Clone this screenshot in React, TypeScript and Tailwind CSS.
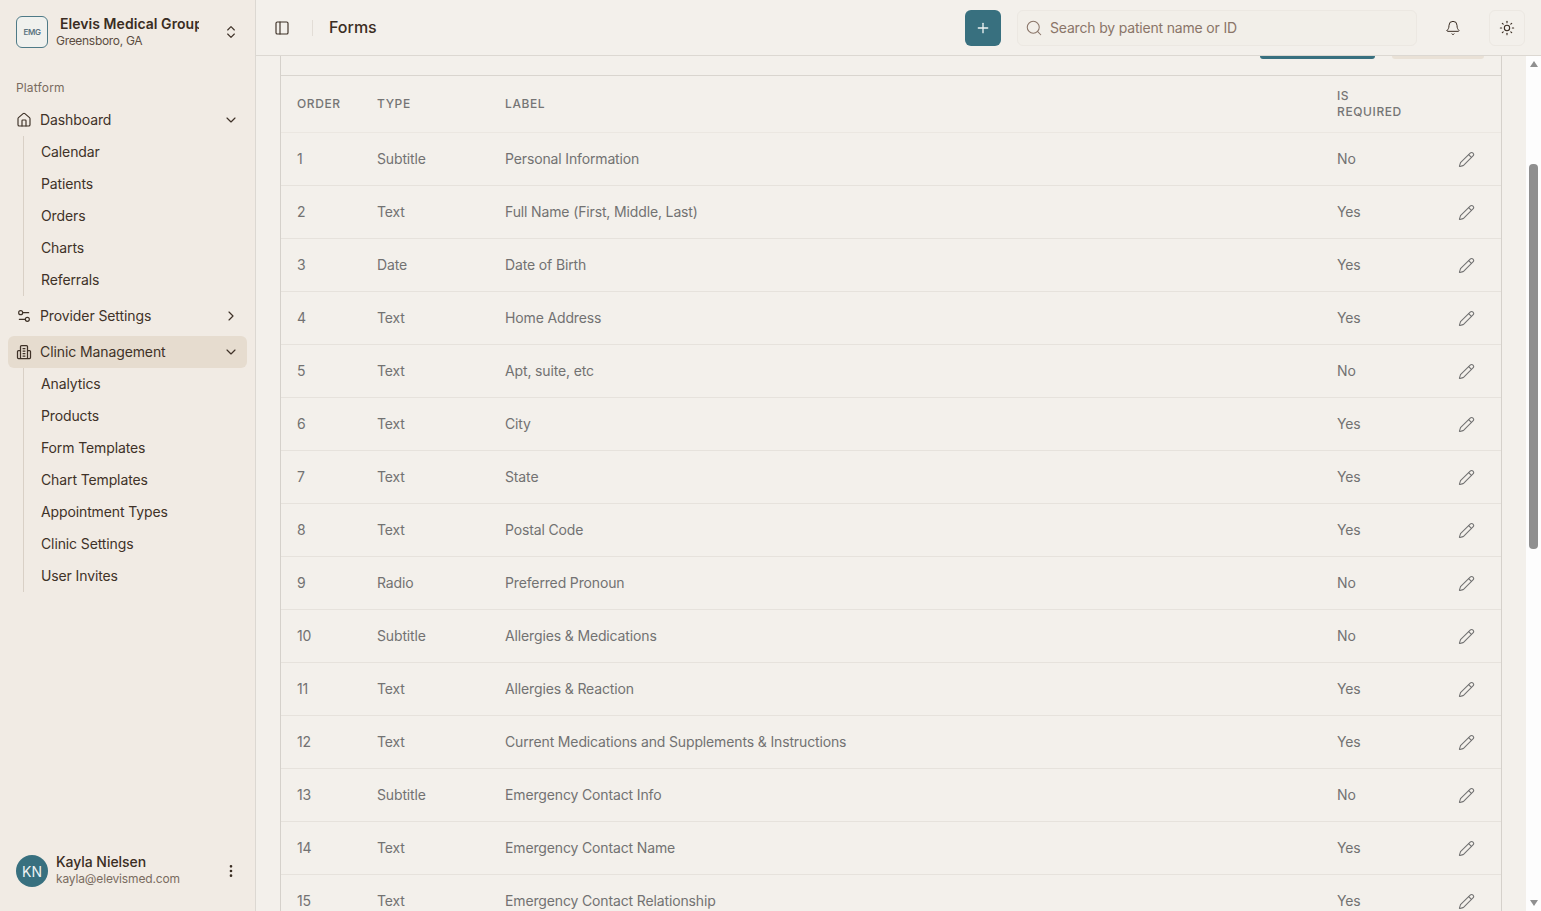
import {
  Bell,
  ChevronDown,
  ChevronRight,
  ChevronsUpDown,
  EllipsisVertical,
  House,
  PanelLeft,
  Pencil,
  Plus,
  Search,
  Settings2,
  Sun,
} from "lucide-react";
import type { ReactNode } from "react";

const FIELDS: [string, string, string][] = [
  ["Subtitle", "Personal Information", "No"],
  ["Text", "Full Name (First, Middle, Last)", "Yes"],
  ["Date", "Date of Birth", "Yes"],
  ["Text", "Home Address", "Yes"],
  ["Text", "Apt, suite, etc", "No"],
  ["Text", "City", "Yes"],
  ["Text", "State", "Yes"],
  ["Text", "Postal Code", "Yes"],
  ["Radio", "Preferred Pronoun", "No"],
  ["Subtitle", "Allergies & Medications", "No"],
  ["Text", "Allergies & Reaction", "Yes"],
  ["Text", "Current Medications and Supplements & Instructions", "Yes"],
  ["Subtitle", "Emergency Contact Info", "No"],
  ["Text", "Emergency Contact Name", "Yes"],
  ["Text", "Emergency Contact Relationship", "Yes"],
];

function ClinicIcon() {
  return (
    <svg viewBox="0 0 16 16" fill="none" stroke="currentColor" strokeWidth="1.25" className="h-4 w-4">
      <path d="M4.5 14.5V2.6c0-.6.4-1 1-1h5c.6 0 1 .4 1 1v11.9" />
      <path d="M4.5 6.5H2.5c-.6 0-1 .4-1 1v6c0 .6.4 1 1 1h11c.6 0 1-.4 1-1v-6c0-.6-.4-1-1-1h-2" />
      <path d="M6.6 4.5h2.8M6.6 7h2.8M6.6 9.5h2.8M6.6 12h2.8" />
    </svg>
  );
}

function NavRow({
  icon,
  label,
  open,
  active,
}: {
  icon: ReactNode;
  label: string;
  open: boolean;
  active?: boolean;
}) {
  return (
    <div
      className={`flex h-8 items-center gap-2 rounded-md pl-2 pr-2 text-[#3f3228] ${active ? "bg-[#e6dccf]" : ""}`}
    >
      <span className="flex h-4 w-4 shrink-0 items-center justify-center">{icon}</span>
      <span className="flex-1 truncate pb-px tracking-[-0.1px]">{label}</span>
      {open ? (
        <ChevronDown className="h-4 w-4" strokeWidth={1.75} />
      ) : (
        <ChevronRight className="h-4 w-4" strokeWidth={1.75} />
      )}
    </div>
  );
}

function SubNav({ items }: { items: string[] }) {
  return (
    <div className="ml-[15px] border-l border-[#d9d0c6] pl-[17px]">
      {items.map((item) => (
        <div key={item} className="flex h-8 items-center pb-px tracking-[-0.12px] text-[#3f3228]">
          {item}
        </div>
      ))}
    </div>
  );
}

function Sidebar() {
  return (
    <aside className="flex h-full w-[256px] shrink-0 flex-col border-r border-[#dcd8d2] bg-[#f1ebe4] text-[14px]">
      <div className="flex h-[64px] items-start pl-4 pr-4 pt-4">
        <div className="flex h-8 w-8 shrink-0 items-center justify-center rounded-md border border-[#4e7a87] bg-[#f0f1ee] text-[8px] font-semibold tracking-[-0.4px] text-[#5b7480]">
          EMG
        </div>
        <div className="ml-2 min-w-0 flex-1">
          <div className="ml-1 h-[18px] w-[139px] overflow-hidden whitespace-nowrap text-[14px] font-semibold leading-[15px] tracking-[0.05px] text-[#3a2d23]">
            Elevis Medical Group
          </div>
          <div className="-mt-px text-[12px] leading-[15px] tracking-[-0.3px] text-[#5c4d41]">Greensboro, GA</div>
        </div>
        <ChevronsUpDown className="mr-0 mt-2 h-4 w-4 text-[#3f3228]" strokeWidth={1.75} />
      </div>
      <div className="flex h-[40px] items-end pb-[8px] pl-4 text-[12px] leading-4 tracking-[0.15px] text-[#7a6b5f]">
        Platform
      </div>
      <nav className="flex-1 pl-2 pr-2">
        <NavRow icon={<House className="h-4 w-4" strokeWidth={1.75} />} label="Dashboard" open />
        <SubNav items={["Calendar", "Patients", "Orders", "Charts", "Referrals"]} />
        <div className="mt-1">
          <NavRow icon={<Settings2 className="h-4 w-4" strokeWidth={1.75} />} label="Provider Settings" open={false} />
        </div>
        <div className="mt-1">
          <NavRow icon={<ClinicIcon />} label="Clinic Management" open active />
        </div>
        <SubNav
          items={[
            "Analytics",
            "Products",
            "Form Templates",
            "Chart Templates",
            "Appointment Types",
            "Clinic Settings",
            "User Invites",
          ]}
        />
      </nav>
      <div className="flex h-[64px] items-start pl-4 pr-4 pt-[8px]">
        <div className="flex h-8 w-8 shrink-0 items-center justify-center rounded-full bg-[#38707f] text-[14px] text-[#eef3f3]">
          KN
        </div>
        <div className="ml-2 min-w-0 flex-1">
          <div className="-mt-[2px] text-[14px] font-medium leading-[17px] tracking-[-0.05px] text-[#3a2d23]">
            Kayla Nielsen
          </div>
          <div className="text-[12px] leading-[18px] tracking-[-0.15px] text-[#7a6b5f]">kayla@elevismed.com</div>
        </div>
        <EllipsisVertical className="mt-2 h-4 w-4 text-[#3a2d23]" strokeWidth={2} />
      </div>
    </aside>
  );
}

function Header() {
  return (
    <header className="flex h-[56px] shrink-0 items-center border-b border-[#dcd8d2] pl-[18px] pr-4">
      <PanelLeft className="h-4 w-4 text-[#3f3228]" strokeWidth={1.75} />
      <div className="ml-[22px] h-4 w-px bg-[#e2ddd6]" />
      <div className="ml-4 pb-px text-[16px] font-medium text-[#3a2d23]">Forms</div>
      <div className="flex-1" />
      <button className="flex h-9 w-9 items-center justify-center rounded-md bg-[#38707f] text-[#eef3f3]">
        <Plus className="h-4 w-4" strokeWidth={2} />
      </button>
      <div className="ml-4 flex h-9 w-[400px] items-center gap-[7px] rounded-md border border-[#ece8e2] bg-[#f2efe9] pl-[7px] text-[14px] text-[#8a7568]">
        <Search className="h-[18px] w-[18px]" strokeWidth={1.4} />
        <span className="pb-px tracking-[-0.18px]">Search by patient name or ID</span>
      </div>
      <div className="ml-[18px] flex h-9 w-9 items-center justify-center text-[#3a2d23]">
        <Bell className="h-4 w-4" strokeWidth={1.5} />
      </div>
      <div className="ml-[18px] flex h-9 w-9 items-center justify-center rounded-md border border-[#ece8e2] text-[#3a2d23]">
        <Sun className="h-4 w-4" strokeWidth={1.6} />
      </div>
    </header>
  );
}

function FieldsTable() {
  return (
    <div className="ml-6 w-[1222px] border-x border-[#d5d1cb]">
      <div className="flex h-[20px] justify-end gap-[17px] border-b border-[#d9d5cf] pr-[17px]">
        <div className="h-[3px] w-[115px] rounded-b-md bg-[#38707f]" />
        <div className="h-[3px] w-[92px] rounded-b-md bg-[#e9e1d6]" />
      </div>
      <table className="w-full table-fixed border-collapse text-left text-[14px] tracking-[-0.14px] text-[#727272]">
        <colgroup>
          <col className="w-[80px]" />
          <col className="w-[128px]" />
          <col className="w-[832px]" />
          <col className="w-[112px]" />
          <col />
        </colgroup>
        <thead>
          <tr className="h-[56px] border-b border-[#ebe7e1] text-[12px] leading-4 tracking-[0.05em] text-[#757575]">
            <th className="pl-4 font-medium">ORDER</th>
            <th className="pl-4 font-medium">TYPE</th>
            <th className="pl-4 font-medium">LABEL</th>
            <th className="pl-4 font-medium">
              IS
              <br />
              REQUIRED
            </th>
            <th />
          </tr>
        </thead>
        <tbody>
          {FIELDS.map(([type, label, required], i) => (
            <tr key={label} className="h-[53px] border-b border-[#e6e2dc]">
              <td className="pl-4">{i + 1}</td>
              <td className="pl-4">{type}</td>
              <td className="pl-4">{label}</td>
              <td className="pl-4">{required}</td>
              <td className="pl-[25px] pt-px">
                <Pencil className="h-[17px] w-[17px]" strokeWidth={1.5} />
              </td>
            </tr>
          ))}
        </tbody>
      </table>
    </div>
  );
}

function Scrollbar() {
  return (
    <div className="flex w-[15px] shrink-0 flex-col bg-[#fdfdfd] pl-[3px]">
      <div className="ml-[1px] mt-[5px] h-0 w-0 border-x-[4px] border-b-[6px] border-x-transparent border-b-[#8f8f8f]" />
      <div className="mt-[97px] h-[385px] w-[9px] rounded-[4px] bg-[#8f8f8f]" />
      <div className="flex-1" />
      <div className="mb-[5px] ml-[1px] h-0 w-0 border-x-[4px] border-t-[6px] border-x-transparent border-t-[#8f8f8f]" />
    </div>
  );
}

export default function App() {
  return (
    <div
      className="flex h-[911px] w-[1541px] overflow-hidden bg-[#f3f0eb]"
      style={{ fontFamily: "Inter, 'Liberation Sans', sans-serif" }}
    >
      <Sidebar />
      <main className="flex min-w-0 flex-1 flex-col">
        <Header />
        <div className="flex min-h-0 flex-1">
          <div className="min-w-0 flex-1 overflow-hidden">
            <FieldsTable />
          </div>
          <Scrollbar />
        </div>
      </main>
    </div>
  );
}
